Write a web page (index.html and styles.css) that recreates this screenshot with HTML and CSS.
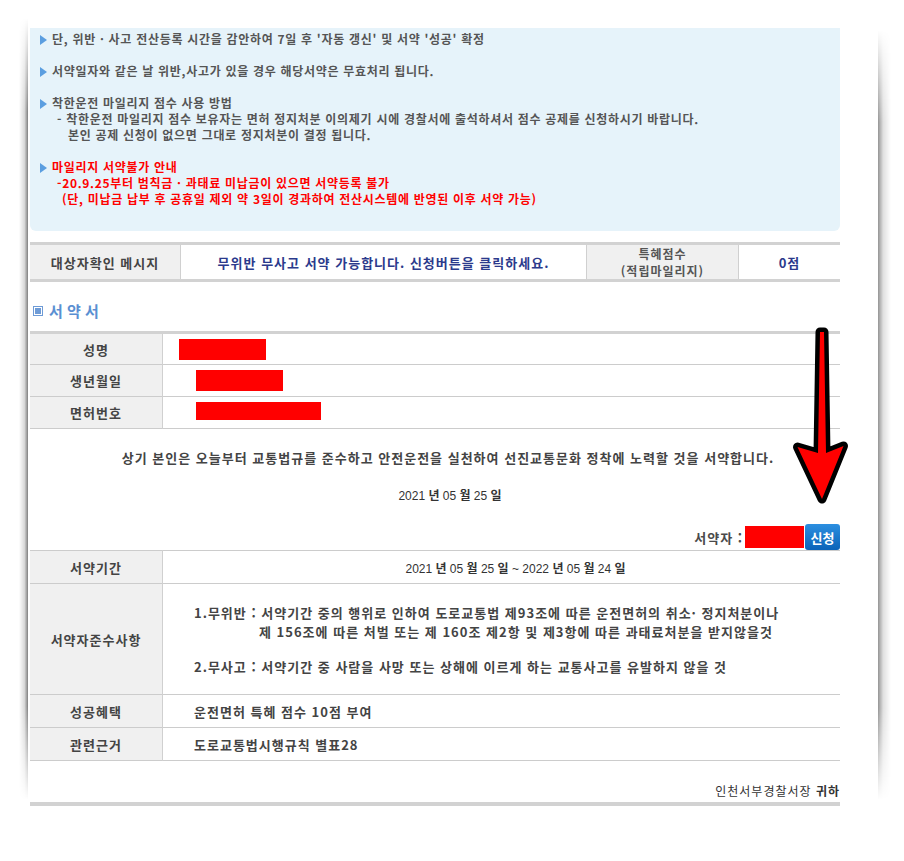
FILE: index.html
```html
<!DOCTYPE html>
<html lang="ko">
<head>
    <meta charset="UTF-8">
    <title>착한운전 마일리지 서약</title>
    <link rel="stylesheet" href="styles.css">
</head>
<body>
    <div class="sheet">
        <div class="notice">
            <div class="block">
                <p><span class="tri"></span>단, 위반 · 사고 전산등록 시간을 감안하여 7일 후 '자동 갱신' 및 서약 '성공' 확정</p>
            </div>
            <div class="block">
                <p><span class="tri"></span>서약일자와 같은 날 위반,사고가 있을 경우 해당서약은 무효처리 됩니다.</p>
            </div>
            <div class="block">
                <p><span class="tri"></span>착한운전 마일리지 점수 사용 방법</p>
                <p class="sub">- 착한운전 마일리지 점수 보유자는 면허 정지처분 이의제기 시에 경찰서에 출석하셔서 점수 공제를 신청하시기 바랍니다.</p>
                <p class="sub2">본인 공제 신청이 없으면 그대로 정지처분이 결정 됩니다.</p>
            </div>
            <div class="block red">
                <p><span class="tri"></span>마일리지 서약불가 안내</p>
                <p class="sub">-20.9.25부터 범칙금 · 과태료 미납금이 있으면 서약등록 불가</p>
                <p class="sub3">(단, 미납금 납부 후 공휴일 제외 약 3일이 경과하여 전산시스템에 반영된 이후 서약 가능)</p>
            </div>
        </div>

        <table class="check">
            <tr>
                <th class="c1">대상자확인 메시지</th>
                <td class="c2 msg">무위반 무사고 서약 가능합니다. 신청버튼을 클릭하세요.</td>
                <th class="c3">특혜점수<br>(적립마일리지)</th>
                <td class="c4 msg">0점</td>
            </tr>
        </table>

        <h2 class="title"><span class="box-icon"></span>서 약 서</h2>

        <table class="form top">
            <tr>
                <th>성명</th>
                <td><span class="mask mask-name"></span></td>
            </tr>
            <tr>
                <th>생년월일</th>
                <td><span class="mask mask-birth"></span></td>
            </tr>
            <tr>
                <th>면허번호</th>
                <td><span class="mask mask-license"></span></td>
            </tr>
        </table>

        <p class="pledge">상기 본인은 오늘부터 교통법규를 준수하고 안전운전을 실천하여 선진교통문화 정착에 노력할 것을 서약합니다.</p>
        <p class="date">2021 <b>년</b> 05 <b>월</b> 25 <b>일</b></p>

        <div class="signer">
            <span class="signer-label">서약자 :</span>
            <span class="mask mask-signer"></span>
            <button class="apply-button">신청</button>
        </div>

        <table class="form terms">
            <tr>
                <th>서약기간</th>
                <td class="period">2021 <b>년</b> 05 <b>월</b> 25 <b>일</b> ~ 2022 <b>년</b> 05 <b>월</b> 24 <b>일</b></td>
            </tr>
            <tr class="row-rules">
                <th>서약자준수사항</th>
                <td class="rules">
                    <p>1.무위반 : 서약기간 중의 행위로 인하여 도로교통법 제93조에 따른 운전면허의 취소· 정지처분이나</p>
                    <p class="indent">제 156조에 따른 처벌 또는 제 160조 제2항 및 제3항에 따른 과태료처분을 받지않을것</p>
                    <p class="second">2.무사고 : 서약기간 중 사람을 사망 또는 상해에 이르게 하는 교통사고를 유발하지 않을 것</p>
                </td>
            </tr>
            <tr>
                <th>성공혜택</th>
                <td class="text">운전면허 특혜 점수 10점 부여</td>
            </tr>
            <tr>
                <th>관련근거</th>
                <td class="text">도로교통법시행규칙 별표28</td>
            </tr>
        </table>

        <div class="footer">인천서부경찰서장 <b>귀하</b></div>

        <svg class="pointer" width="80" height="200" viewBox="0 0 80 200">
            <polygon points="40,12 44,12 46,133 63.5,126 42,179 17.5,127 38,133"
                     fill="#ff0000" stroke="#000" stroke-width="9" stroke-linejoin="round"
                     paint-order="stroke"/>
        </svg>
    </div>
</body>
</html>
```

FILE: styles.css
```css
body {
    margin: 0;
    background-color: white;
    font-family: "Noto Sans CJK KR", "Liberation Sans", sans-serif;
    color: #444;
}
.sheet {
    position: relative;
    width: 850px;
    margin-left: 28px;
    padding: 28px 0 20px 2px;
    box-sizing: border-box;
    height: 830px;
    background-color: white;
}
.sheet::before,
.sheet::after {
    content: "";
    position: absolute;
    top: 18px;
    bottom: 30px;
    -webkit-mask-image: linear-gradient(to bottom, transparent, #000 12%, #000 88%, transparent);
    mask-image: linear-gradient(to bottom, transparent, #000 12%, #000 88%, transparent);
}
.sheet::before {
    left: -9px;
    width: 9px;
    background: linear-gradient(to left, rgba(0, 0, 0, 0.5), rgba(0, 0, 0, 0.15) 40%, rgba(0, 0, 0, 0));
}
.sheet::after {
    right: -13px;
    width: 13px;
    top: 30px;
    background: linear-gradient(to right, rgba(0, 0, 0, 0.42), rgba(0, 0, 0, 0.12) 40%, rgba(0, 0, 0, 0));
}

/* notice box */
.notice {
    width: 810px;
    box-sizing: border-box;
    background-color: #e6f3fa;
    border-radius: 0 0 6px 6px;
    padding: 3px 0 24px 10px;
    font-size: 12px;
    font-weight: bold;
    letter-spacing: 0.7px;
    color: #555;
}
.notice p {
    margin: 0;
    line-height: 16px;
    white-space: nowrap;
}
.block {
    margin-bottom: 16px;
}
.block:last-child {
    margin-bottom: 0;
}
.tri {
    display: inline-block;
    width: 0;
    height: 0;
    border-left: 7px solid #5b9ee0;
    border-top: 5px solid transparent;
    border-bottom: 5px solid transparent;
    margin-right: 5px;
    vertical-align: -1px;
}
.notice .sub {
    padding-left: 17px;
}
.notice .sub2 {
    padding-left: 28px;
}
.notice .sub3 {
    padding-left: 22px;
}
.red {
    color: #ff0000;
}

/* tables */
table {
    border-collapse: collapse;
    width: 810px;
    font-size: 13px;
    font-weight: bold;
    letter-spacing: 1px;
}
th {
    background-color: #f0f0f0;
    color: #444;
    text-align: center;
    font-weight: bold;
}
td, th {
    padding: 0;
}
.check {
    margin-top: 11px;
    border-top: 3px solid #d2d2d2;
    border-bottom: 3px solid #d2d2d2;
}
.check tr {
    height: 36px;
}
.check td, .check th {
    border-left: 1px solid #d0d0d0;
    line-height: 17px;
}
.check .c1 {
    width: 150px;
    border-left: none;
}
.check .c2 {
    width: 405px;
}
.check .c3 {
    width: 151px;
    font-size: 12px;
    color: #555;
}
.msg {
    text-align: center;
    color: #2b3a8c;
}

.title {
    margin: 19px 0 10px;
    padding-left: 3px;
    height: 20px;
    font-size: 15px;
    line-height: 20px;
    color: #5a8fd2;
    display: flex;
    align-items: center;
}
.box-icon {
    display: inline-block;
    width: 8px;
    height: 8px;
    border: 1px solid #6e9bd6;
    background-color: #6e9bd6;
    box-shadow: inset 0 0 0 1px white;
    margin-right: 6px;
}

.form {
    border-bottom: 1px solid #cccccc;
}
.form.top {
    border-top: 3px solid #d2d2d2;
}
.form.terms {
    border-top: 1px solid #cccccc;
}
.form tr {
    height: 32px;
    border-top: 1px solid #cccccc;
}
.form.terms tr {
    height: 33px;
}
.form th {
    width: 132px;
    border-right: 1px solid #d0d0d0;
}
.mask {
    display: inline-block;
    background-color: #ff0000;
    vertical-align: middle;
}
.mask-name {
    width: 87px;
    height: 21px;
    margin-left: 16px;
}
.mask-birth {
    width: 87px;
    height: 21px;
    margin-left: 33px;
}
.mask-license {
    width: 125px;
    height: 18px;
    margin-left: 33px;
    margin-top: -6px;
}

.pledge {
    width: 810px;
    box-sizing: border-box;
    margin: 19px 0 0;
    padding-left: 26px;
    text-align: center;
    font-size: 13px;
    font-weight: bold;
    letter-spacing: 1px;
    line-height: 20px;
}
.date {
    width: 810px;
    box-sizing: border-box;
    margin: 17px 0 0;
    padding-left: 30px;
    text-align: center;
    font-family: "Liberation Sans", "Noto Sans CJK KR", sans-serif;
    font-size: 12px;
    line-height: 20px;
    color: #333;
}
.date b, .period b {
    font-family: "Noto Sans CJK KR", sans-serif;
}

.signer {
    width: 810px;
    display: flex;
    justify-content: flex-end;
    align-items: center;
    margin-top: 18px;
    height: 26px;
    font-size: 13px;
    font-weight: bold;
    color: #4a4a4a;
}
.signer-label {
    margin-right: 2px;
    letter-spacing: 1px;
}
.mask-signer {
    width: 59px;
    height: 22px;
}
.apply-button {
    width: 35px;
    height: 26px;
    margin-left: 1px;
    border: none;
    border-radius: 3px;
    background: linear-gradient(#2c8fe0, #0a63b8);
    color: white;
    font-family: "Noto Sans CJK KR", sans-serif;
    font-size: 13px;
    font-weight: bold;
    padding: 0;
}

.period {
    text-align: center;
    padding-left: 28px;
    font-family: "Liberation Sans", "Noto Sans CJK KR", sans-serif;
    font-size: 12px;
    font-weight: normal;
    letter-spacing: 0;
    color: #333;
}
.form.terms .row-rules {
    height: 111px;
}
.rules {
    padding-left: 31px;
}
.rules p {
    margin: 0;
    line-height: 19px;
}
.rules .indent {
    padding-left: 65px;
}
.rules .second {
    margin-top: 16px;
}
.text {
    padding-left: 31px;
}

.footer {
    width: 810px;
    margin-top: 22px;
    padding-bottom: 3px;
    border-bottom: 4px solid #d2d2d2;
    text-align: right;
    font-size: 12px;
    letter-spacing: 1px;
    line-height: 16px;
    color: #333;
}

.pointer {
    position: absolute;
    left: 752px;
    top: 320px;
}
```
